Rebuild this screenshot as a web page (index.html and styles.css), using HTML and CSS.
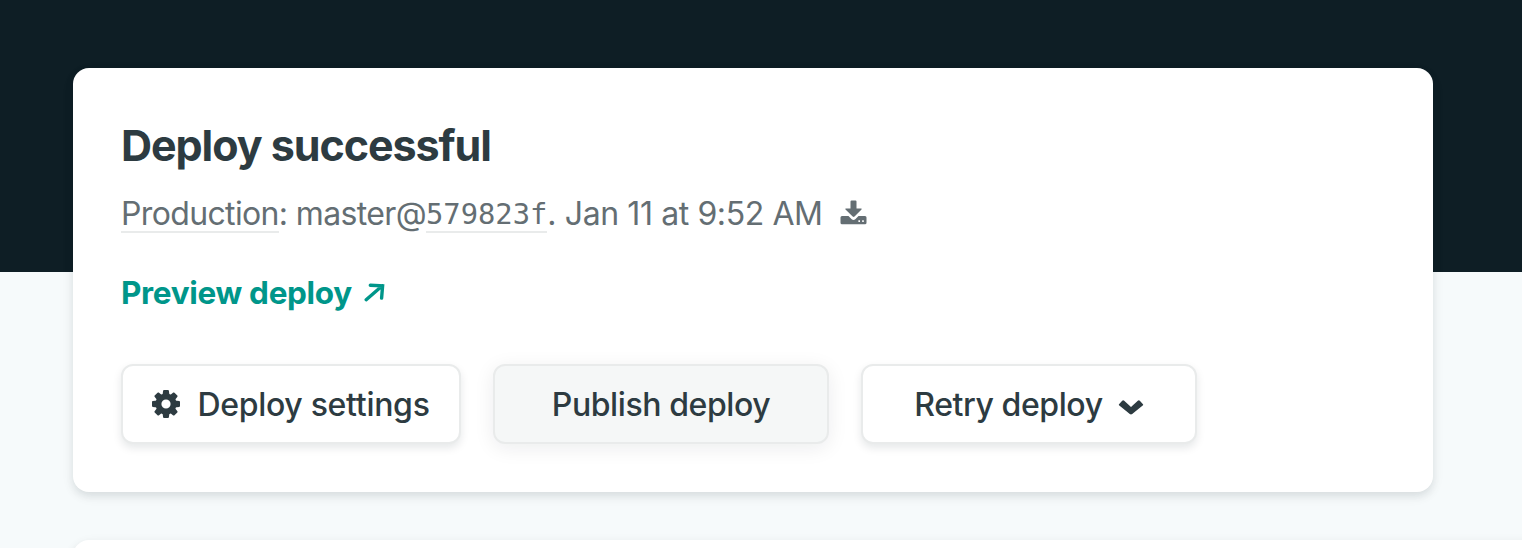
FILE: index.html
```html
<!DOCTYPE html>
<html lang="en">
<head>
<meta charset="utf-8">
<title>Deploy successful</title>
<link rel="stylesheet" href="styles.css">
</head>
<body>
<main class="page">
  <section class="card">
    <h1 class="title">Deploy successful</h1>
    <p class="meta">
      <span class="source"><a class="underlined">Production</a>: master@</span><a class="underlined commit">579823f</a><span class="date">. Jan 11 at 9:52 AM</span>
      <svg class="download" width="28" height="26" viewBox="0 0 28 26"><path fill="currentColor" fill-rule="evenodd" d="M10.500 1.500q0-1 1-1h4q1 0 1 1V8.500h4.500q1.300 0 .5 1l-7 7q-.9.800-1.800 0L5.500 9.500Q4.700 8.500 6 8.500h4.500zM2 16h6.500l3.200 3.200q1.800 1.500 3.600 0L18.500 16H25q1.500 0 1.500 1.500v5.200q0 1.500-1.500 1.500H2q-1.500 0-1.500-1.500v-5.200Q.5 16 2 16zm16.400 4.300v1.600h1.600v-1.600zm3.800 0v1.600h1.600v-1.600z"/></svg>
    </p>
    <a class="preview"><span>Preview deploy</span><svg width="22" height="22" viewBox="0 0 22 22"><path d="M2.200 17.700 18.300 3.800M6.300 3.300l12.300.5-1 12.300" fill="none" stroke="currentColor" stroke-width="3.400" stroke-linecap="round" stroke-linejoin="miter"/></svg></a>
    <div class="actions">
      <button class="button settings">
        <svg width="28" height="28" viewBox="-14 -14 28 28"><g fill="currentColor"><path fill-rule="evenodd" d="M-10.500 0a10.500 10.500 0 1 0 21 0a10.500 10.500 0 1 0-21 0zm5.900 0a4.600 4.600 0 1 1 9.200 0a4.600 4.600 0 1 1-9.200 0z"/><path id="tooth" d="M-3.500-8.500L-2.900-13.200q.1-.8.900-.8h4q.8 0 .9.800L3.500-8.500z"/><use href="#tooth" transform="rotate(45)"/><use href="#tooth" transform="rotate(90)"/><use href="#tooth" transform="rotate(135)"/><use href="#tooth" transform="rotate(180)"/><use href="#tooth" transform="rotate(225)"/><use href="#tooth" transform="rotate(270)"/><use href="#tooth" transform="rotate(315)"/></g></svg>
        <span>Deploy settings</span>
      </button>
      <button class="button publish"><span>Publish deploy</span></button>
      <button class="button retry"><span>Retry deploy</span><svg width="26" height="16" viewBox="0 0 26 16"><path fill="currentColor" d="M1 5.200 4.200 1.700q1-.9 2 0L13 8l6.800-6.300q1-.9 2 0L25 5.200q.4.500 0 1L14.200 15q-1.200.8-2.400 0L1 6.200q-.4-.5 0-1z"/></svg></button>
    </div>
  </section>
  <section class="card next"></section>
</main>
</body>
</html>
```
FILE: styles.css
```css
* { box-sizing: border-box; }
body {
  margin: 0;
  font-family: Inter, "Liberation Sans", sans-serif;
  background: #f6fafb;
  color: #2d3b41;
}
.page {
  height: 548px;
  overflow: hidden;
  padding: 68px 0 0 73px;
  background: linear-gradient(#0e1e25 272px, #f6fafb 272px);
}
.card {
  width: 1360px;
  height: 424px;
  padding: 48px;
  border-radius: 16px;
  background: #fff;
  box-shadow: 0 4px 8px rgba(14, 30, 37, .10), 0 4px 16px rgba(14, 30, 37, .04);
}
.next { width: 1500px; margin-top: 48px; height: 80px; }
.title {
  margin: 0;
  height: 60px;
  line-height: 58px;
  font-size: 43px;
  font-weight: 700;
  letter-spacing: -1.06px;
}
.meta {
  display: flex;
  margin: 14px 0 0;
  height: 47px;
  line-height: 48px;
  font-size: 32px;
  font-weight: 430;
  color: #646e73;
  white-space: nowrap;
}
.source { letter-spacing: -.64px; }
.date { letter-spacing: -.4px; white-space: pre; }
.underlined {
  display: inline-block;
  height: 43px;
  border-bottom: 2px solid #e9ebeb;
}
.commit { font: 28.8px/48px "DejaVu Sans Mono", monospace; }
.download { margin: 10px 0 0 17px; }
.preview {
  display: flex;
  gap: 12px;
  margin-top: 31px;
  height: 48px;
  align-items: center;
  font-size: 31.500px;
  font-weight: 700;
  letter-spacing: -.32px;
  color: #00968a;
}
.preview svg { margin-top: 1px; }
.actions { display: flex; gap: 32px; margin-top: 48px; }
.button {
  display: flex;
  align-items: center;
  justify-content: center;
  width: 336px;
  height: 80px;
  padding: 0;
  border: 2px solid #e9ebeb;
  border-radius: 12px;
  background: #fff;
  color: #2d3b41;
  font: 500 32px/48px Inter, "Liberation Sans", sans-serif;
  letter-spacing: -.42px;
  box-shadow: 0 4px 8px rgba(14, 30, 37, .10);
}
.button span { padding-top: 2px; }
.settings { width: 340px; gap: 17px; }
.settings span { letter-spacing: -.3px; }
.publish { background: #f5f7f7; box-shadow: 0 4px 20px rgba(14, 30, 37, .08); }
.retry { gap: 15px; }
.retry svg { margin-top: 6px; }
```
